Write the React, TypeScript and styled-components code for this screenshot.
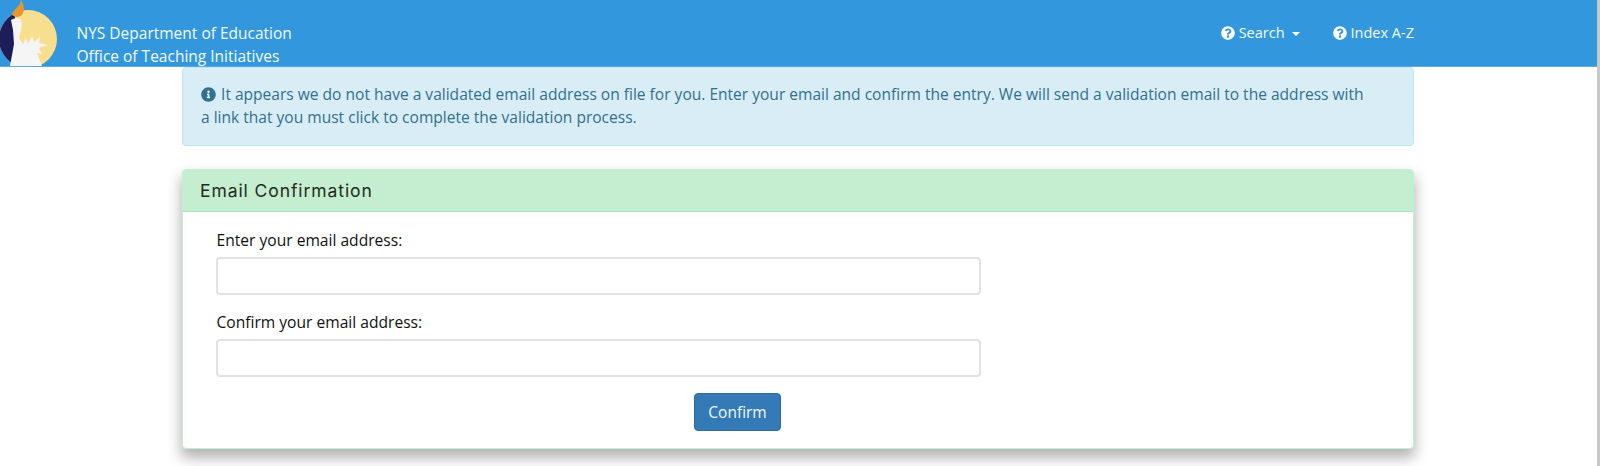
import React from "react";
import styled, { createGlobalStyle } from "styled-components";
import { FaInfoCircle, FaQuestionCircle } from "react-icons/fa";

const Global = createGlobalStyle`
  html, body { margin: 0; padding: 0; height: 100%; overflow: hidden; background: #fff; }
  body { font-family: "Open Sans", "Liberation Sans", sans-serif; font-size: 14px; line-height: 20px; color: #000; }
`;

const Page = styled.div`
  position: relative;
  width: 1600px;
  height: 466px;
  overflow: hidden;
`;

const Nav = styled.header`
  height: 66px;
  background: #3397dd;
  border-bottom: 1px solid #5aabe3;
  box-sizing: content-box;
  display: flex;
  align-items: stretch;
  color: #fff;
  overflow: hidden;
`;

const Logo = styled.svg`
  width: 60px;
  height: 66px;
  flex: none;
`;

const Brand = styled.div`
  margin-left: 16.5px;
  padding-top: 22px;
  font-size: 15.5px;
  line-height: 22.5px;
  white-space: nowrap;
  color: #f4fafe;
`;

const NavLinks = styled.nav`
  margin-left: auto;
  margin-right: 186px;
  display: flex;
  gap: 33px;
  padding-top: 23px;
`;

const NavLink = styled.a`
  display: flex;
  align-items: center;
  height: 20px;
  gap: 4px;
  color: #f4fafe;
  font-size: 14.5px;
  & svg { width: 14px; height: 14px; color: #fff; }
`;

const Caret = styled.span`
  width: 0;
  height: 0;
  margin-left: 3px;
  margin-top: 2px;
  border-top: 4px solid #fff;
  border-left: 4px solid transparent;
  border-right: 4px solid transparent;
`;

const Main = styled.main`
  width: 1232px;
  margin-left: 182px;
  display: flex;
  flex-direction: column;
  gap: 23px;
`;

const Alert = styled.div`
  box-sizing: border-box;
  height: 79px;
  padding: 15px 18px;
  background: #d9edf7;
  border: 1px solid #bce8f1;
  border-radius: 4px;
  color: #31708f;
  font-size: 15.55px;
  line-height: 22.5px;
  & svg { width: 15px; height: 15px; vertical-align: -1.5px; margin-right: 1px; }
`;

const Panel = styled.section`
  box-sizing: border-box;
  height: 280px;
  background: #fff;
  border: 1px solid #c3eecf;
  border-radius: 4px;
  box-shadow: 0 8px 14px 1px rgba(0, 0, 0, 0.3);
`;

const PanelHeading = styled.h2`
  margin: 0;
  box-sizing: border-box;
  height: 42px;
  padding: 10px 17px;
  background: #c4eecf;
  border-bottom: 1px solid #b0e4be;
  border-radius: 3px 3px 0 0;
  font-family: "Inter", "Open Sans", sans-serif;
  font-size: 17.5px;
  line-height: 22px;
  font-weight: 400;
  letter-spacing: 0.92px;
  color: #1f2a22;
`;

const Form = styled.form`
  padding: 18px 33.5px 0;
  display: flex;
  flex-direction: column;
`;

const Field = styled.div`
  display: flex;
  flex-direction: column;
  gap: 7px;
  margin-bottom: 17px;
`;

const Label = styled.label`
  font-size: 15.6px;
  line-height: 20px;
  font-weight: 500;
  color: #111;
`;

const Input = styled.input`
  box-sizing: border-box;
  width: 765px;
  height: 38px;
  margin-left: -0.5px;
  border: 2px solid #e2e2e2;
  border-radius: 4px;
  background: #fff;
  padding: 6px 12px;
`;

const Actions = styled.div`
  display: flex;
  padding-left: 477.5px;
  margin-top: -1px;
`;

const Button = styled.button`
  box-sizing: border-box;
  width: 87px;
  height: 38px;
  background: #337ab7;
  border: 1px solid #2e6da4;
  border-radius: 4px;
  color: #f2f7fb;
  font-family: inherit;
  font-size: 15.5px;
`;

const Scrollbar = styled.div`
  position: absolute;
  top: 0;
  right: 0;
  width: 3px;
  height: 466px;
  background: #c9c9c9;
`;

export default function App() {
  return (
    <Page>
      <Global />
      <Nav>
        <Logo viewBox="0 0 60 66" aria-hidden="true">
          <defs>
            <clipPath id="disc">
              <circle cx="28" cy="39" r="29" />
            </clipPath>
          </defs>
          <circle cx="28" cy="39" r="29" fill="#f8df8f" />
          <g clipPath="url(#disc)">
            <path d="M-2 10 L15 10 L15 66 L-2 66 Z" fill="#1e1d5a" />
          </g>
          <path d="M11 20 Q15 17 20 19 L22 24 L19 38 L23 44 L26 38 L28 44 L32 36 L34 42 L40 37 L39 43 L47 45 L39 48 L42 54 L37 53 L42 66 L10 66 L14 44 L13 30 Z" fill="#f5f5f5" />
          <path d="M21 0 C24 5 25 10 22 15 Q17 19 12 15 C13 9 20 7 21 0 Z" fill="#e8962e" />
        </Logo>
        <Brand>
          NYS Department of Education
          <br />
          Office of Teaching Initiatives
        </Brand>
        <NavLinks>
          <NavLink>
            <FaQuestionCircle />
            Search
            <Caret />
          </NavLink>
          <NavLink>
            <FaQuestionCircle />
            Index A-Z
          </NavLink>
        </NavLinks>
      </Nav>
      <Main>
        <Alert>
          <FaInfoCircle /> It appears we do not have a validated email address on file for you. Enter your email and
          confirm the entry. We will send a validation email to the address with
          <br />
          a link that you must click to complete the validation process.
        </Alert>
        <Panel>
          <PanelHeading>Email Confirmation</PanelHeading>
          <Form>
            <Field>
              <Label>Enter your email address:</Label>
              <Input type="text" />
            </Field>
            <Field>
              <Label>Confirm your email address:</Label>
              <Input type="text" />
            </Field>
            <Actions>
              <Button type="button">Confirm</Button>
            </Actions>
          </Form>
        </Panel>
      </Main>
      <Scrollbar />
    </Page>
  );
}
